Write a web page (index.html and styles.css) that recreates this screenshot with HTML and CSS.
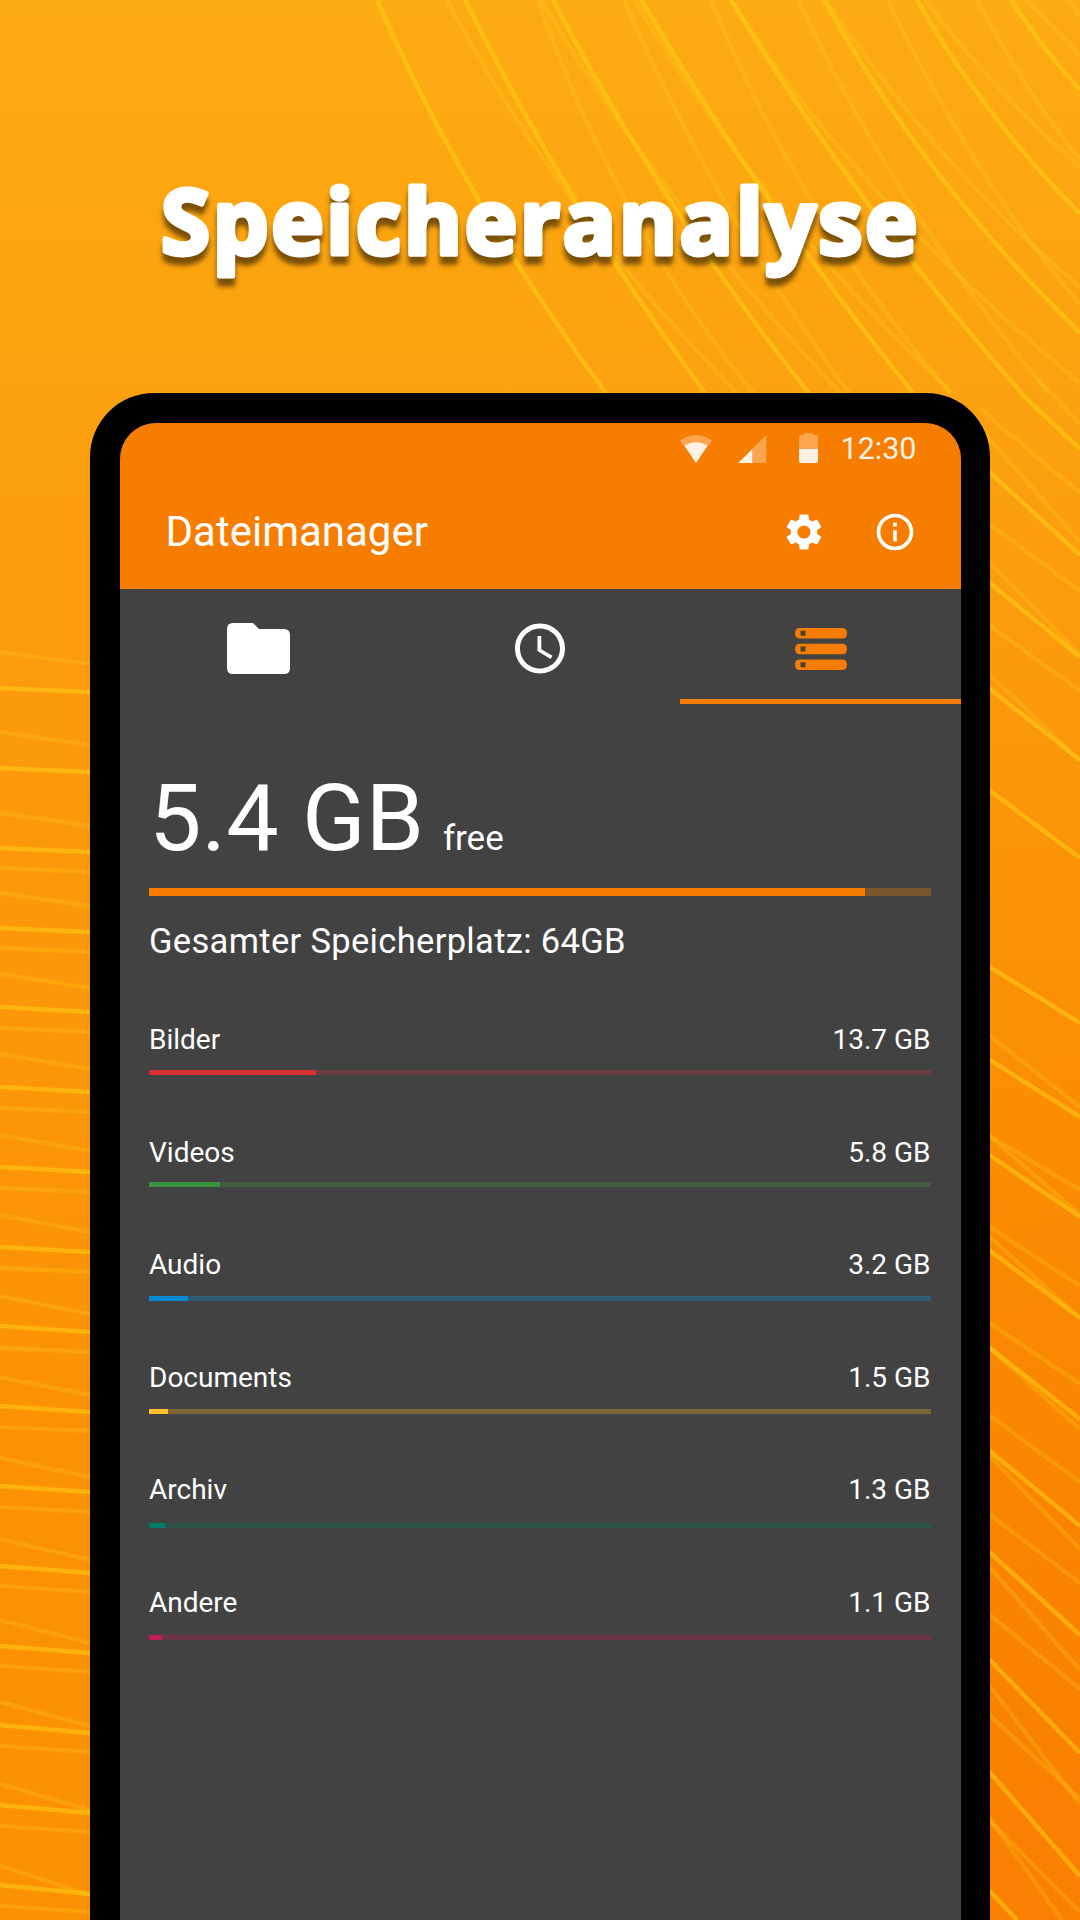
FILE: index.html
```html
<!DOCTYPE html>
<html lang="de">
<head>
<meta charset="utf-8">
<title>Speicheranalyse</title>
<link rel="stylesheet" href="styles.css">
</head>
<body>
<div class="poster">
  <svg class="waves" viewBox="0 0 1080 1920" aria-hidden="true">
    <g class="wave-bright">
      <path d="M377 0Q466 204 606 393"/>
      <path d="M465 0Q562 198 705 393"/>
      <path d="M553 0Q663 210 809 393"/>
      <path d="M641 0Q761 203 913 393"/>
      <path d="M731 0Q852 201 1026 398L1080 449"/>
      <path d="M824 0Q924 180 1080 333"/>
      <path d="M917 0Q981 113 1080 214"/>
      <path d="M1011 0Q1042 48 1080 90"/>
      <path d="M985 468L1080 555M985 579L1080 657M985 685L1080 760M985 787L1080 858"/>
      <path d="M985 964L1080 1023M985 1057L1080 1117M985 1152L1080 1217M985 1247L1080 1318M985 1344L1080 1419M985 1447L1080 1526M985 1548L1080 1635M985 1655L1080 1753M985 1767L1080 1876M985 1886L1017 1920"/>
      <path d="M0 688L90 692M0 768L90 772M0 848L90 852M0 928L90 932M0 1007L90 1012M0 1087L90 1092M0 1167L90 1172M0 1247L90 1252M0 1326L90 1332M0 1406L90 1412M0 1486L90 1492M0 1566L90 1573M0 1646L90 1653M0 1725L90 1733M0 1805L90 1813M0 1885L90 1894"/>
    </g>
    <g class="wave-faint">
      <path d="M538 0Q615 222 753 393"/>
      <path d="M624 0Q718 216 849 393"/>
      <path d="M711 0Q798 214 950 393"/>
      <path d="M798 0Q899 214 1049 393"/>
      <path d="M888 0Q968 170 1080 305"/>
      <path d="M977 0Q1026 92 1080 160"/>
      <path d="M1069 0L1080 17"/>
    </g>
    <g class="wave-faint">
      <path d="M447 0Q557 210 737 393"/>
      <path d="M541 0Q660 200 840 393"/>
      <path d="M635 0Q752 202 952 393"/>
      <path d="M731 0Q857 200 1080 383"/>
      <path d="M826 0Q938 168 1080 287"/>
      <path d="M925 0Q995 92 1080 167"/>
      <path d="M1026 0L1080 55"/>
      <path d="M1038 380L1080 424M980 409L1080 493M985 434L1080 542M985 521L1080 591M985 557L1080 655M985 622L1080 691M985 670L1080 761"/>
      <path d="M985 1032L1080 1107M985 1133L1080 1190M985 1224L1080 1286M985 1320L1080 1384M985 1412L1080 1482M985 1511L1080 1583M985 1611L1080 1689M985 1711L1080 1799M985 1816L1080 1912"/>
    </g>
    <g class="wave-faint">
      <path d="M985 1132L1080 1215M985 1233L1080 1318M985 1344L1080 1429M985 1451L1080 1549M985 1562L1080 1670M985 1680L1080 1804M985 1812L1062 1920"/>
      <path d="M0 652L90 664M0 732L90 745M0 813L90 826M0 893L90 906M0 974L90 988M0 1054L90 1069M0 1135L90 1151M0 1215L90 1232M0 1296L90 1314M0 1377L90 1395M0 1458L90 1477M0 1539L90 1560M0 1620L90 1643M0 1702L90 1726M0 1784L90 1810M0 1866L90 1895"/>
      <path d="M0 868L90 872M0 948L90 952M0 1028L90 1032M0 1108L90 1112M0 1188L90 1192M0 1268L90 1272M0 1348L90 1352M0 1427L90 1431M0 1507L90 1512M0 1586L90 1592M0 1666L90 1672M0 1746L90 1752M0 1826L90 1832M0 1906L90 1912"/>
    </g>
  </svg>

  <h1 class="headline">
    <svg class="headline-art" viewBox="0 0 1080 393">
      <text class="headline-text" x="161" y="253.500" textLength="759" lengthAdjust="spacingAndGlyphs">Speicheranalyse</text>
    </svg>
  </h1>

  <main class="phone">
    <div class="screen">
      <header class="header">
        <div class="status">
          <svg class="status-wifi" viewBox="0 0 32 28"><path opacity=".35" d="M0 5.5Q16-5.5 32 5.500L16 28Z"/><path d="M4.500 10.500Q16 4 27.500 10.500L16 28Z"/></svg>
          <svg class="status-signal" viewBox="0 0 28 28"><path opacity=".35" d="M28 0V28H14V14Z"/><path d="M14 14V28H0Z"/></svg>
          <svg class="status-battery" viewBox="0 0 19 30"><path opacity=".35" d="M5 0H14V2H17Q19 2 19 4V16H0V4Q0 2 2 2H5Z"/><path d="M0 16H19V28Q19 30 17 30H2Q0 30 0 28Z"/></svg>
          <span class="clock">12:30</span>
        </div>
        <div class="appbar">
          <span class="app-title">Dateimanager</span>
          <svg class="action" viewBox="0 0 24 24"><path d="M19.140 12.940c.04-.3.060-.61.060-.94 0-.32-.02-.64-.07-.94l2.030-1.580c.18-.14.230-.41.120-.61l-1.920-3.320c-.12-.22-.37-.29-.59-.22l-2.390.96c-.5-.38-1.030-.7-1.620-.94l-.36-2.540c-.04-.24-.24-.41-.48-.41h-3.840c-.24 0-.43.170-.47.410l-.36 2.540c-.59.240-1.130.570-1.620.940l-2.390-.96c-.22-.08-.47 0-.59.220L2.740 8.870c-.12.210-.08.470.120.610l2.030 1.580c-.05.300-.09.630-.09.940s.02.640.070.940l-2.030 1.580c-.18.140-.23.410-.12.610l1.920 3.320c.12.220.370.290.590.220l2.390-.96c.5.380 1.030.7 1.620.940l.36 2.540c.05.240.240.410.480.410h3.840c.24 0 .44-.17.470-.41l.36-2.540c.59-.24 1.130-.56 1.620-.94l2.390.96c.22.080.470 0 .59-.22l1.920-3.320c.12-.22.070-.47-.12-.61l-2.010-1.580zM12 15.600c-1.980 0-3.600-1.620-3.600-3.600s1.620-3.600 3.600-3.600 3.600 1.620 3.600 3.600-1.620 3.600-3.600 3.600z"/></svg>
          <svg class="action" viewBox="0 0 24 24"><path d="M11 7h2v2h-2zm0 4h2v6h-2zm1-9C6.480 2 2 6.480 2 12s4.480 10 10 10 10-4.480 10-10S17.520 2 12 2zm0 18c-4.410 0-8-3.590-8-8s3.590-8 8-8 8 3.590 8 8-3.590 8-8 8z"/></svg>
        </div>
      </header>

      <nav class="tabs">
        <div class="tab"><svg class="icon-folder" viewBox="0 0 63 51"><path d="M6 0H26L32 6H57Q63 6 63 12V45Q63 51 57 51H6Q0 51 0 45V6Q0 0 6 0Z"/></svg></div>
        <div class="tab"><svg class="icon-recent" viewBox="2 2 20 20"><path d="M11.990 2C6.470 2 2 6.480 2 12s4.470 10 9.990 10C17.520 22 22 17.520 22 12S17.520 2 11.990 2zM12 20c-4.420 0-8-3.580-8-8s3.580-8 8-8 8 3.580 8 8-3.580 8-8 8zm.5-13H11v6l5.250 3.150.75-1.230-4.500-2.670z"/></svg></div>
        <div class="tab tab-active"><svg class="icon-storage" viewBox="0 0 52 42"><path fill-rule="evenodd" d="M5 0H47Q52 0 52 5.200T47 10.500H5Q0 10.500 0 5.200T5 0ZM5.500 2.800V7.800H10.500V2.800ZM5 15.700H47Q52 15.700 52 21T47 26.300H5Q0 26.300 0 21T5 15.700ZM5.500 18.500V23.500H10.500V18.500ZM5 31.500H47Q52 31.500 52 36.700T47 42H5Q0 42 0 36.700T5 31.500ZM5.500 34.200V39.200H10.500V34.200Z"/></svg></div>
      </nav>

      <section class="summary">
        <div class="free"><span class="free-size">5.4 GB</span><span class="free-label">free</span></div>
        <div class="meter orange"><div class="meter-fill" style="width:91.6%"></div></div>
        <div class="total">Gesamter Speicherplatz: 64GB</div>
      </section>

      <section class="list">
        <div class="row red"><div class="labels"><span>Bilder</span><span>13.7 GB</span></div><div class="bar"><div class="bar-fill" style="width:21.4%"></div></div></div>
        <div class="row green"><div class="labels"><span>Videos</span><span>5.8 GB</span></div><div class="bar"><div class="bar-fill" style="width:9.1%"></div></div></div>
        <div class="row blue"><div class="labels"><span>Audio</span><span>3.2 GB</span></div><div class="bar"><div class="bar-fill" style="width:5%"></div></div></div>
        <div class="row amber"><div class="labels"><span>Documents</span><span>1.5 GB</span></div><div class="bar"><div class="bar-fill" style="width:2.4%"></div></div></div>
        <div class="row teal"><div class="labels"><span>Archiv</span><span>1.3 GB</span></div><div class="bar"><div class="bar-fill" style="width:2%"></div></div></div>
        <div class="row pink"><div class="labels"><span>Andere</span><span>1.1 GB</span></div><div class="bar"><div class="bar-fill" style="width:1.7%"></div></div></div>
      </section>
    </div>
  </main>
</div>
</body>
</html>
```
FILE: styles.css
```css
* { box-sizing: border-box; }
body { margin: 0; font-family: Roboto, sans-serif; color: #fff; }
svg { display: block; flex: none; fill: currentColor; }

.poster {
  position: relative;
  width: 1080px;
  height: 1920px;
  overflow: hidden;
  display: flex;
  flex-direction: column;
  align-items: center;
  background:
    radial-gradient(ellipse 900px 1300px at 100% 100%, #f98000 10%, rgba(249, 128, 0, 0) 100%),
    linear-gradient(180deg, #fdab12 0%, #fb9b0d 33%, #fb9203 75%, #fb9102 100%);
}
.waves { position: absolute; inset: 0; width: 1080px; height: 1920px; fill: none; stroke-width: 4.5; }
.wave-bright { stroke: #ffd414; stroke-opacity: .5; }
.wave-faint { stroke: #ffd01c; stroke-opacity: .25; }

.headline { position: relative; margin: 0; height: 393px; flex: none; }
.headline-art { width: 1080px; height: 393px; }
.headline-text {
  font: 700 90px "Open Sans", sans-serif;
  letter-spacing: 2.5px;
  fill: #fff;
  stroke: #fff;
  stroke-width: 5;
  stroke-linejoin: round;
  filter: drop-shadow(0 8px 2.5px rgba(0, 0, 0, .52));
}

.phone {
  position: relative;
  width: 900px;
  flex: 1;
  padding: 29.5px 29.5px 0;
  background: #000;
  border-radius: 64px 64px 0 0;
}
.screen { height: 100%; background: #424242; border-radius: 36px 36px 0 0; overflow: hidden; }

.header { height: 166px; background: #f77d00; }
.status { height: 52px; padding: 0 44px 0 0; display: flex; justify-content: flex-end; align-items: center; color: #fff1e4; }
.status-wifi { width: 32px; height: 28px; margin-right: 26px; }
.status-signal { width: 28.5px; height: 28px; margin-right: 32px; }
.status-battery { width: 19px; height: 30px; margin: -2px 23px 0 0; }
.clock { font-size: 30.5px; line-height: 52px; color: #fff1e4; }
.appbar { height: 114px; padding: 0 44px 0 46px; display: flex; align-items: center; }
.app-title { flex: 1; font-size: 42px; line-height: 114px; }
.action { width: 44px; height: 44px; }
.action + .action { margin-left: 47px; }

.tabs { height: 115px; display: grid; grid-template-columns: repeat(3, 1fr); }
.tab { display: flex; justify-content: center; padding-top: 34.500px; border-bottom: 5px solid transparent; }
.tab-active { color: #f77d00; border-color: #f77d00; }
.icon-folder { width: 63px; height: 51px; margin-right: 2px; }
.icon-recent { width: 50px; height: 51px; }
.icon-storage { width: 52px; height: 42px; margin: 4.5px 0 0 2px; }

.summary { padding: 59px 30px 0 29.500px; }
.free { height: 125.500px; display: flex; align-items: baseline; line-height: 110px; }
.free-size { font-size: 93.500px; }
.free-label { font-size: 35px; margin-left: 19px; }
.meter { height: 8px; background: #7a552c; }
.meter-fill { height: 8px; background: currentColor; }
.total { margin-top: 24px; font-size: 34.500px; line-height: 42px; letter-spacing: .33px; }
.orange { color: #f77d00; }

.list { padding: 61px 30px 0 29.500px; display: flex; flex-direction: column; }
.row { height: 112.600px; }
.labels { display: flex; justify-content: space-between; font-size: 28px; line-height: 34px; color: #fff; }
.bar { height: 5px; margin-top: 12.500px; }
.row:nth-child(n+3) .bar { margin-top: 14px; }
.row:nth-child(n+5) .bar { margin-top: 15.500px; }
.bar-fill { height: 5px; background: currentColor; }
.red { color: #d83031; } .red .bar { background: #6a3e3e; }
.green { color: #3a913e; } .green .bar { background: #435b41; }
.blue { color: #058bd3; } .blue .bar { background: #305b73; }
.amber { color: #fdc22d; } .amber .bar { background: #7c6636; }
.teal { color: #047b6c; } .teal .bar { background: #2c5449; }
.pink { color: #c11c5c; } .pink .bar { background: #6b3449; }
```
